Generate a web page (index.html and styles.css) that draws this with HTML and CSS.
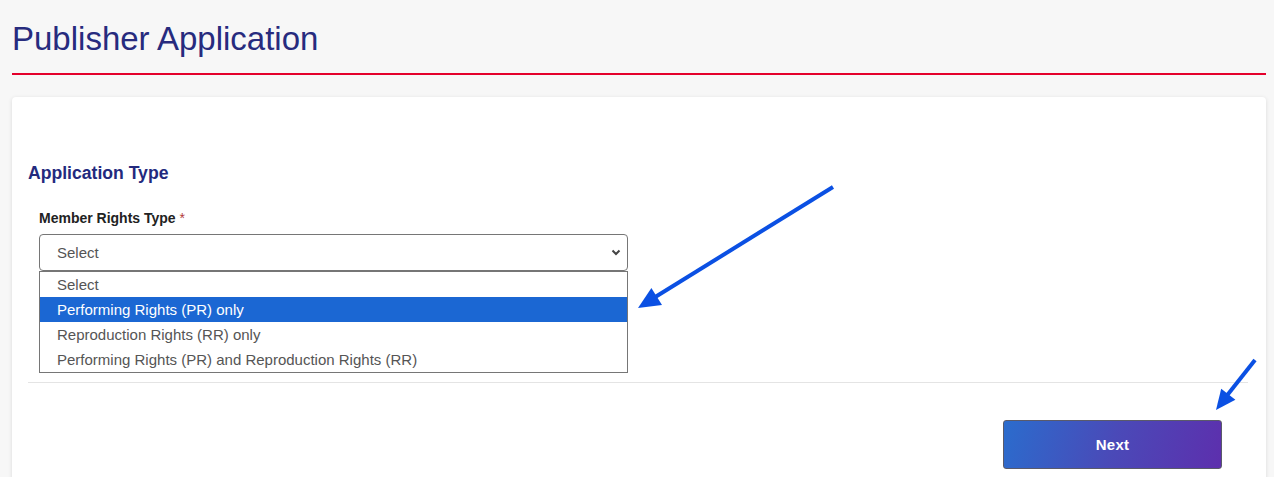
FILE: index.html
```html
<!DOCTYPE html>
<html lang="en">
<head>
<meta charset="utf-8">
<title>Publisher Application</title>
<link rel="stylesheet" href="styles.css">
</head>
<body>
<div class="page">
  <h1 class="title">Publisher Application</h1>
  <div class="card">
    <h2 class="section-title">Application Type</h2>
    <div class="field">
      <label class="label">Member Rights Type <span class="req">*</span></label>
      <div class="select-wrap">
        <div class="select">
          <span>Select</span>
          <svg class="chev" width="10" height="7" viewBox="0 0 10 7"><path d="M1.5 1.5 L5 5 L8.5 1.5" fill="none" stroke="#444" stroke-width="2"/></svg>
        </div>
        <ul class="options">
          <li class="opt">Select</li>
          <li class="opt active">Performing Rights (PR) only</li>
          <li class="opt">Reproduction Rights (RR) only</li>
          <li class="opt">Performing Rights (PR) and Reproduction Rights (RR)</li>
        </ul>
      </div>
    </div>
    <div class="actions">
      <button class="btn-next">Next</button>
    </div>
  </div>
</div>
<svg class="annot" width="1274" height="477" viewBox="0 0 1274 477">
  <line x1="833" y1="187" x2="652" y2="299" stroke="#0b50e3" stroke-width="4"/>
  <polygon points="638,308 662,305 651.4,287.9" fill="#0b50e3"/>
  <line x1="1255" y1="360" x2="1225" y2="398" stroke="#0b50e3" stroke-width="4"/>
  <polygon points="1216,410 1235.4,399.7 1221.2,388.7" fill="#0b50e3"/>
</svg>
</body>
</html>
```
FILE: styles.css
```css
* { box-sizing: border-box; }
html, body { margin: 0; padding: 0; }
body {
  background: #f7f7f7;
  font-family: "Liberation Sans", Arial, sans-serif;
  width: 1274px;
  height: 477px;
  overflow: hidden;
  position: relative;
}
.page {
  padding: 0 8px 0 12px;
}
.title {
  margin: 20px 0 0;
  font-size: 33px;
  font-weight: 400;
  line-height: 38px;
  color: #272b7e;
  padding-bottom: 15px;
  border-bottom: 2px solid #e4002b;
}
.card {
  margin-top: 22px;
  background: #fff;
  border-radius: 4px;
  box-shadow: 0 1px 4px rgba(0,0,0,0.12);
  padding: 66px 18px 20px 16px;
  height: 400px;
}
.section-title {
  margin: 0;
  font-size: 17.6px;
  font-weight: 700;
  line-height: 21px;
  color: #232a7e;
}
.field {
  padding: 27px 0 0 11px;
  margin-bottom: 111px;
}
.label {
  display: block;
  font-size: 14px;
  font-weight: 700;
  line-height: 15px;
  color: #222;
  margin-bottom: 8px;
}
.req { color: #b23a3a; font-weight: 400; }
.select-wrap {
  position: relative;
  width: 589px;
}
.select {
  height: 37px;
  border: 1px solid #767676;
  border-radius: 4px;
  display: flex;
  align-items: center;
  justify-content: space-between;
  padding: 0 6px 0 17px;
  font-size: 15px;
  color: #555;
}
.options {
  position: absolute;
  left: 0;
  top: 37px;
  width: 589px;
  margin: 0;
  padding: 0;
  list-style: none;
  background: #fff;
  border: 1px solid #767676;
}
.opt {
  height: 25px;
  line-height: 25px;
  padding-left: 17px;
  font-size: 15px;
  color: #555;
}
.opt.active {
  background: #1b67d3;
  color: #fff;
}
.actions {
  border-top: 1px solid #e4e4e4;
  padding-top: 37px;
  display: flex;
  justify-content: flex-end;
  padding-right: 26px;
}
.btn-next {
  width: 219px;
  height: 49px;
  border: 1px solid #5a5a6a;
  border-radius: 3px;
  background: linear-gradient(105deg, #2b6ccd 0%, #4a4ab8 50%, #5d2fad 100%);
  color: #fff;
  font-family: "Liberation Sans", Arial, sans-serif;
  font-size: 15px;
  font-weight: 700;
  letter-spacing: 0.3px;
}
.annot {
  position: absolute;
  left: 0;
  top: 0;
  pointer-events: none;
}
```
